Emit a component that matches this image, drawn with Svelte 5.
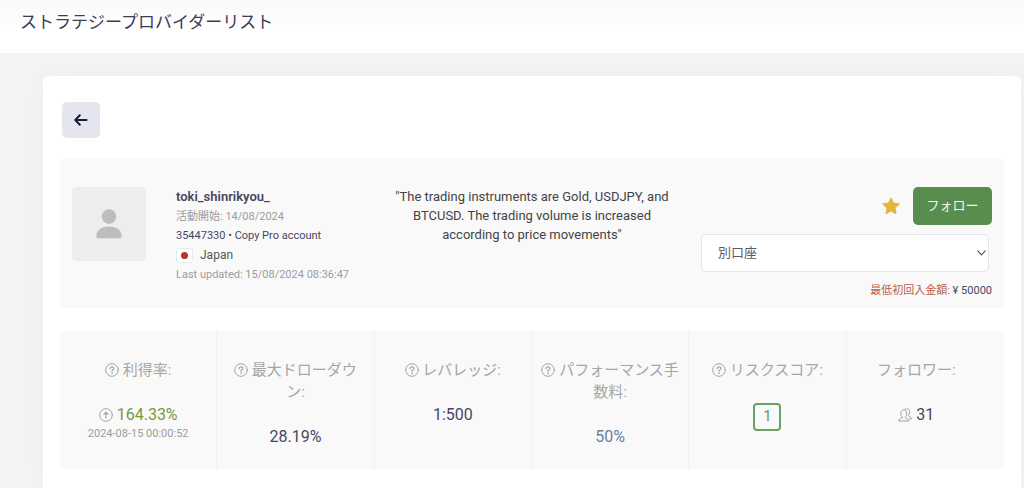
<script>
  let account = $state('other');
  const stats = [
    { label: '利得率:', help: true, kind: 'gain', value: '164.33%', note: '2024-08-15 00:00:52' },
    { label: '最大ドローダウン:', help: true, kind: 'plain', value: '28.19%' },
    { label: 'レバレッジ:', help: true, kind: 'plain', value: '1:500' },
    { label: 'パフォーマンス手数料:', help: true, kind: 'fee', value: '50%' },
    { label: 'リスクスコア:', help: true, kind: 'risk', value: '1' },
    { label: 'フォロワー:', help: false, kind: 'followers', value: '31' }
  ];
</script>

<div class="page">
  <header><h1>ストラテジープロバイダーリスト</h1></header>

  <main>
    <section class="card">
      <button class="back" type="button" aria-label="戻る">
        <svg width="14" height="12" viewBox="0 0 14 12" fill="none" stroke="#1c1b38" stroke-width="2" stroke-linecap="round" stroke-linejoin="round">
          <path d="M12.600 6H1.600M5.800 1.200L1.300 6L5.800 10.800" />
        </svg>
      </button>

      <div class="profile">
        <div class="avatar">
          <svg width="26" height="30" viewBox="0 0 26 30" fill="#bdbdbd">
            <circle cx="13" cy="7.6" r="7.3" />
            <path d="M.4 27.5C.4 21 5.4 17.6 13 17.6s12.6 3.4 12.6 9.9c0 1.2-.6 1.8-1.8 1.8H2.2C1 29.300.4 28.700.4 27.500Z" />
          </svg>
        </div>

        <div class="identity">
          <strong>toki_shinrikyou_</strong>
          <span class="muted">活動開始: 14/08/2024</span>
          <span class="account">35447330 • Copy Pro account</span>
          <span class="country"><i class="flag"></i>Japan</span>
          <span class="muted">Last updated: 15/08/2024 08:36:47</span>
        </div>

        <p class="about">"The trading instruments are Gold, USDJPY, and BTCUSD. The trading volume is increased according to price movements"</p>

        <div class="actions">
          <div class="buttons">
            <button class="star" type="button" aria-label="お気に入り">
              <svg width="18" height="18" viewBox="0 0 18 18" fill="#e5b53d" stroke="#e5b53d" stroke-width="1.4" stroke-linejoin="round">
                <path d="M9 1.300L11.300 6.200L16.900 6.900L12.800 10.700L13.900 16.300L9 13.600L4.100 16.300L5.200 10.700L1.100 6.900L6.700 6.200Z" />
              </svg>
            </button>
            <button class="follow" type="button">フォロー</button>
          </div>
          <div class="picker">
            <select bind:value={account} aria-label="口座">
              <option value="other">別口座</option>
            </select>
            <svg width="9" height="6" viewBox="0 0 9 6" fill="none" stroke="#4b4b5c" stroke-width="1.100" stroke-linecap="round" stroke-linejoin="round">
              <path d="M.8.9L4.500 4.800L8.200.9" />
            </svg>
          </div>
          <div class="minimum"><span>最低初回入金額:</span> ¥ 50000</div>
        </div>
      </div>

      <div class="stats">
        {#each stats as s}
          <div class="stat">
            <div class="label">
              {#if s.help}
                <svg class="icon" width="14" height="14" viewBox="0 0 14 14" fill="none" stroke="#a3a3a3" stroke-linecap="round">
                  <circle cx="7" cy="7" r="6.300" />
                  <path d="M5.100 5.700C5.100 3.300 8.900 3.300 8.900 5.500C8.900 6.900 7 6.800 7 8.300" stroke-width="1.200" />
                  <circle cx="7" cy="10.200" r=".4" fill="#a3a3a3" stroke-width=".7" />
                </svg>
              {/if}
              {s.label}
            </div>
            <div class="value {s.kind}">
              {#if s.kind === 'gain'}
                <svg class="icon" width="14" height="14" viewBox="0 0 14 14" fill="none" stroke="#a3a3a3" stroke-linecap="round" stroke-linejoin="round">
                  <circle cx="7" cy="7" r="6.300" />
                  <path d="M7 10V4.300M4.900 6.300L7 4.200L9.100 6.300" stroke-width="1.200" />
                </svg>
              {:else if s.kind === 'followers'}
                <svg class="icon" width="14" height="14" viewBox="0 0 14 14" fill="none" stroke="#a3a3a3" stroke-linecap="round" stroke-linejoin="round">
                  <path d="M4.300 9.300C1.800 7.400 2.300 1.800 5.700 1.800S9.600 7.400 7.100 9.300C7.100 10.800 10.800 10.200 10.800 13H.6C.6 10.200 4.300 10.800 4.300 9.300Z" />
                  <path d="M6.700 1.500C9.300-.4 12.500 1.500 11.600 5C11.300 6.400 10.600 7 10.400 7.400C10.400 8.900 13.400 8.500 13.400 11H11.500" />
                </svg>
              {/if}
              {#if s.kind === 'risk'}<span class="score">{s.value}</span>{:else}<span>{s.value}</span>{/if}
            </div>
            {#if s.note}<div class="note">{s.note}</div>{/if}
          </div>
        {/each}
      </div>
    </section>
  </main>
</div>

<style>
  :global(body) {
    margin: 0;
    background: #f4f4f4;
    font-family: Roboto, "Noto Sans CJK JP", sans-serif;
    color: #48475e;
  }
  * { box-sizing: border-box; }
  button, select { font-family: inherit; border: 0; padding: 0; margin: 0; }
  svg { display: block; }
  .page { overflow: hidden; }
  header {
    height: 53px;
    padding: 9px 20px 0;
    background: linear-gradient(#f9f9fa, #fff 32px);
  }
  h1 {
    margin: 0;
    font-size: 17px;
    line-height: 26px;
    font-weight: 400;
    color: #3d3c56;
  }
  main { padding: 23px 3px 0 43px; }
  .card {
    min-height: calc(100vh - 76px);
    padding: 26px 17px 18px;
    background: #fff;
    border-radius: 6px 6px 0 0;
    box-shadow: 0 0 30px rgba(0, 0, 0, 0.04);
  }
  .back {
    display: grid;
    place-items: center;
    width: 38px;
    height: 36px;
    margin-left: 2px;
    border-radius: 5px;
    background: #e5e5ef;
  }
  .profile {
    display: flex;
    min-height: 150px;
    margin-top: 20px;
    padding: 29px 12px 8px;
    border-radius: 5px;
    background: #f9f9f9;
  }
  .avatar {
    display: grid;
    place-items: center;
    flex: none;
    width: 74px;
    height: 74px;
    border-radius: 4px;
    background: #ededed;
  }
  .identity {
    display: flex;
    flex-direction: column;
    flex: none;
    width: 206px;
    margin-left: 30px;
    font-size: 11px;
    line-height: 19px;
    white-space: nowrap;
  }
  .identity > * { height: 19px; }
  .identity strong { height: 20px; font-size: 13px; font-weight: 600; }
  .identity .muted { color: #9c9c9c; }
  .country {
    display: flex;
    align-items: center;
    gap: 7px;
    height: 20px;
    font-size: 12px;
    color: #555;
  }
  .flag {
    display: grid;
    place-items: center;
    width: 17px;
    height: 15px;
    border: 1px solid #e8e8f2;
    border-radius: 3px;
    background: #fff;
  }
  .flag::after {
    content: "";
    width: 7px;
    height: 7px;
    border-radius: 50%;
    background: #b13a1c;
  }
  .about {
    flex: 1;
    margin: 0;
    padding: 0 12px;
    font-size: 13px;
    line-height: 19px;
    text-align: center;
    color: #444;
  }
  .actions {
    flex: none;
    display: flex;
    flex-direction: column;
    width: 291px;
    margin-left: 19px;
  }
  .buttons {
    display: flex;
    align-items: center;
    justify-content: flex-end;
    gap: 13px;
  }
  .star { background: none; }
  .follow {
    width: 79px;
    height: 38px;
    padding-bottom: 4px;
    border-radius: 5px;
    background: #598d4e;
    color: #f1f5f0;
    font-size: 13px;
  }
  .picker {
    display: grid;
    align-items: center;
    margin: 9px 3px 0 0;
  }
  .picker > * { grid-area: 1 / 1; }
  .picker svg { justify-self: end; margin-right: 3px; pointer-events: none; }
  select {
    appearance: none;
    width: 100%;
    height: 38px;
    padding: 0 16px 2px;
    border: 1px solid #e5e5ef;
    border-radius: 5px;
    background: #fff;
    color: #5b5b6a;
    font-size: 13px;
  }
  .minimum {
    margin-top: 9px;
    font-size: 11px;
    line-height: 19px;
    text-align: right;
  }
  .minimum span { color: #b95b4e; }
  .stats {
    display: grid;
    grid-template-columns: repeat(6, 1fr);
    margin-top: 23px;
    background: #f9f9f9;
  }
  .stat {
    min-height: 138px;
    padding: 28px 8px 20px;
    border-right: 1px solid #f0f0f0;
    text-align: center;
  }
  .stat:last-child { border-right: 0; padding-right: 26px; }
  .label {
    font-size: 15px;
    line-height: 22px;
    color: #a6a6a6;
  }
  .icon { display: inline-block; vertical-align: -2px; }
  .value {
    margin-top: 22px;
    font-size: 16px;
    line-height: 23px;
  }
  .gain { color: #75993d; }
  .fee { color: #66809f; }
  .score {
    display: grid;
    place-items: center;
    width: 28px;
    height: 28px;
    margin: 0 auto;
    padding-bottom: 1px;
    border: 2px solid #6ba263;
    border-radius: 4px;
    color: #5f9c55;
    font-size: 15px;
  }
  .note {
    font-size: 11px;
    line-height: 16px;
    color: #9c9c9c;
  }
</style>
